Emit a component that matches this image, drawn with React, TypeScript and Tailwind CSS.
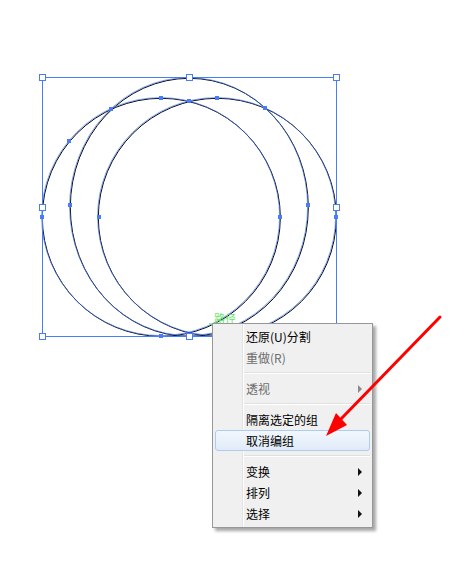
import React from 'react';

type Item =
  | { kind: 'item'; label: string; disabled?: boolean; submenu?: boolean; active?: boolean }
  | { kind: 'sep' };

const menu: Item[] = [
  { kind: 'item', label: '还原(U)分割' },
  { kind: 'item', label: '重做(R)', disabled: true },
  { kind: 'sep' },
  { kind: 'item', label: '透视', disabled: true, submenu: true },
  { kind: 'sep' },
  { kind: 'item', label: '隔离选定的组' },
  { kind: 'item', label: '取消编组', active: true },
  { kind: 'sep' },
  { kind: 'item', label: '变换', submenu: true },
  { kind: 'item', label: '排列', submenu: true },
  { kind: 'item', label: '选择', submenu: true },
];

const BLUE = '#4a7cf7';

// bounding box handles (hollow) and path anchors (filled)
const handles = [
  [42, 77], [189, 77], [336, 77],
  [42, 207], [336, 207],
  [42, 336], [189, 336], [336, 336],
];
const anchors = [
  [42, 217], [69, 141], [111, 109], [161, 98], [189, 101], [217, 98], [265, 108],
  [70, 205], [99, 217], [280, 217], [308, 205], [336, 217], [161, 336], [189, 335],
];

function Shapes({ stroke, width, dx = 0, dy = 0 }: { stroke: string; width: number; dx?: number; dy?: number }) {
  return (
    <g transform={`translate(${dx} ${dy})`} fill="none" stroke={stroke} strokeWidth={width}>
      <ellipse cx={189} cy={207} rx={119} ry={129} />
      <circle cx={161} cy={217} r={119} />
      <circle cx={217} cy={217} r={119} />
    </g>
  );
}

function Artboard() {
  return (
    <svg width="474" height="562" viewBox="0 0 474 562" className="block">
      <Shapes stroke="#000" width={1} dx={0.3} dy={0.3} />
      <Shapes stroke={BLUE} width={0.7} dx={-0.4} dy={-0.4} />
      <rect x={42.5} y={77.5} width={294} height={259} fill="none" stroke={BLUE} strokeWidth={1} />
      {anchors.map(([x, y], i) => (
        <rect key={i} x={x - 2} y={y - 2} width={4} height={4} fill={BLUE} />
      ))}
      {handles.map(([x, y], i) => (
        <rect key={i} x={x - 2.5} y={y - 2.5} width={6} height={6} fill="#fff" stroke={BLUE} strokeWidth={1} />
      ))}
      <text x={214} y={323} fontSize="11" fill="#5fe85f" fontFamily="'Noto Sans CJK SC', sans-serif">
        路径
      </text>
      <path d="M209 323 l4 3" stroke="#5fe85f" strokeWidth={1} />
    </svg>
  );
}

function Arrow() {
  return (
    <svg width="474" height="562" viewBox="0 0 474 562" className="absolute left-0 top-0 pointer-events-none">
      <line x1={440} y1={317} x2={340} y2={420} stroke="#ff0000" strokeWidth={3} strokeLinecap="round" />
      <polygon points="326,436 347,425 336,413" fill="#ff0000" />
    </svg>
  );
}

function ContextMenu() {
  return (
    <div className="absolute left-[212px] top-[323px] w-[161px] border border-[#979797] bg-[#f0f0f0] py-[2px] pb-[3px] shadow-[3px_3px_3px_rgba(0,0,0,0.35)] text-[12px] font-normal font-['Noto_Sans_CJK_SC',sans-serif]">
      <div className="absolute left-[29px] top-0 bottom-0 w-[2px] border-l border-[#e2e3e3] border-r border-r-white" />
      {menu.map((it, i) =>
        it.kind === 'sep' ? (
          <div key={i} className="h-[10px] flex flex-col justify-center pl-[31px] pr-[2px]">
            <div className="h-px bg-[#e0e0e0]" />
            <div className="h-px bg-white" />
          </div>
        ) : (
          <div
            key={i}
            className={
              'relative mx-[2px] h-[21px] flex items-center pl-[30px] pr-[7px] rounded-[3px] border ' +
              (it.active
                ? 'border-[#aeccf1] bg-gradient-to-b from-[#f2f7fd] to-[#e0ebf8]'
                : 'border-transparent') +
              (it.disabled ? ' text-[#6d6d6d]' : ' text-black')
            }
          >
            <span className="flex-1 leading-none">{it.label}</span>
            {it.submenu && (
              <span
                className={
                  'w-0 h-0 border-y-[4px] border-y-transparent border-l-[4px] ' +
                  (it.disabled ? 'border-l-[#8a8a8a]' : 'border-l-[#111]')
                }
              />
            )}
          </div>
        )
      )}
    </div>
  );
}

export default function App() {
  return (
    <div className="relative w-[474px] h-[562px] bg-white overflow-hidden">
      <Artboard />
      <ContextMenu />
      <Arrow />
    </div>
  );
}
